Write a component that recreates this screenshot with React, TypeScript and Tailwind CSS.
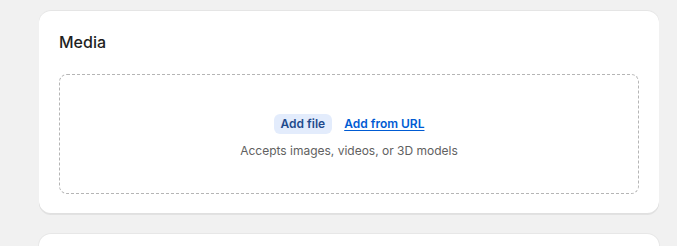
export default function App() {
  return (
    <div
      className="h-[246px] w-full overflow-hidden bg-[#f1f1f1] pt-[10px] pl-[39px] pr-[18px] text-[#303030]"
      style={{ fontFamily: "Inter, 'Noto Sans', sans-serif" }}
    >
      {/* Media card */}
      <section className="rounded-xl bg-white px-5 pt-5 pb-5 shadow-[0_1px_0_0_rgba(26,26,26,0.07),0_1px_0_0_rgba(204,204,204,0.5)_inset,0_-1px_0_0_rgba(0,0,0,0.12)_inset]">
        <h2 className="text-[16px] font-medium leading-6 text-[#1f1f1f]">Media</h2>
        <div className="mt-5 flex h-[120px] flex-col items-center justify-center gap-[9px] rounded-lg border border-dashed border-[#b5b5b5] pt-1">
          <div className="flex items-center gap-3">
            <button className="h-5 rounded-md bg-[#e3ecfc] px-[7px] text-[12px] font-semibold text-[#1f4a8c]">
              Add file
            </button>
            <a
              className="text-[12px] font-semibold text-[#005bd3] underline decoration-1 underline-offset-2"
              href="#"
            >
              Add from URL
            </a>
          </div>
          <p className="text-[12px] leading-4 text-[#616161]">Accepts images, videos, or 3D models</p>
        </div>
      </section>

      {/* next card peeking in */}
      <section className="mt-5 h-[40px] rounded-t-xl bg-white shadow-[0_0_0_1px_rgba(0,0,0,0.04)]" />
    </div>
  )
}
